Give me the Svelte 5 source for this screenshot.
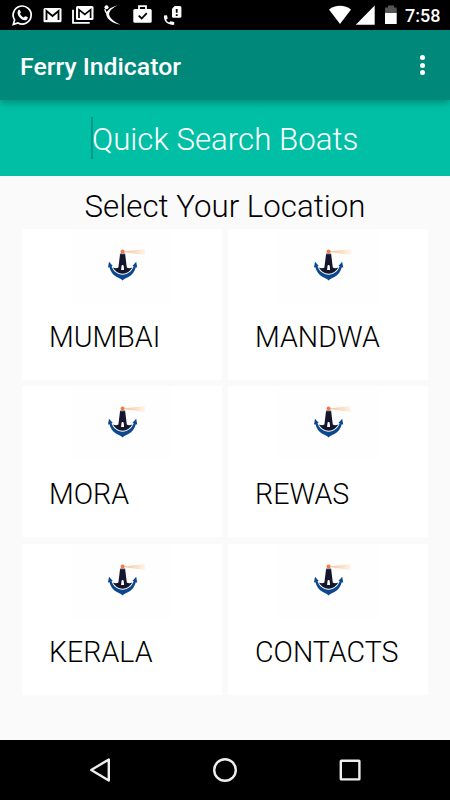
<script lang="ts">
  const locations = ["MUMBAI", "MANDWA", "MORA", "REWAS", "KERALA", "CONTACTS"];
</script>

<!-- Lighthouse standing on an anchor, shown on every card -->
{#snippet lighthouse()}
  <svg class="logo" viewBox="0 0 100 74" aria-hidden="true">
    <defs>
      <linearGradient id="beam" x1="0" x2="1" y1="0" y2="0">
        <stop offset="0" stop-color="#f8c79d" />
        <stop offset="0.6" stop-color="#fbe0c8" />
        <stop offset="1" stop-color="#fff6ee" />
      </linearGradient>
    </defs>
    <path d="M52.5 22.3 73 20v6l-20.5-2.7z" fill="url(#beam)" />
    <path d="M40.8 38.6c2.2.8 4.4.7 5.6 0l1.700-13.800h5l1.700 13.800c1.200.7 3.400.8 5.600 0-2.300 3.700-5.400 5.900-9.800 6.200-4.400-.3-7.500-2.500-9.800-6.200z" fill="#15152d" />
    <path d="M49.500 37c0-1.500 2.200-1.500 2.200 0l.4 4h-3z" fill="#fff" />
    <circle cx="50.600" cy="22.600" r="2" fill="#f37b43" />
    <path d="M47.900 24.900h5.400" stroke="#8b8190" stroke-width=".7" />
    <path d="M37 32.800 40.800 37l-1.300.2c1.800 5.100 6 8.300 11.100 8.600 5.100-.3 9.300-3.500 11.100-8.600l-1.300-.2 3.800-4.200 1 5.800-1.400-.4c-1.200 4.500-3.400 7.500-7.400 9.800-2.200 1-4 1.800-5.800 3.400-1.800-1.600-3.600-2.400-5.800-3.400-4-2.300-6.200-5.300-7.400-9.800l-1.400.4z" fill="#0b488f" />
  </svg>
{/snippet}

<div class="screen">
  <div class="status-bar">
    <svg class="notifications" viewBox="0 0 200 30" aria-hidden="true">
      <path d="m13.300 24.400 1.300-4.500A9 9 0 1 1 18 23z" fill="none" stroke="#fff" stroke-width="1.700" />
      <path d="M18.300 10.200c.6-.6 1.500-.4 1.800.3l.7 1.800c.2.7-1 1.400-.8 1.800.8 1.600 2 2.700 3.600 3.300.5.2 1.300-1.400 1.900-1.200l2 .9c.8.4-.1 2.400-1.100 2.800-4.700 1.700-11.100-5.800-8.100-9.700z" fill="#fff" />
      <rect x="43.500" y="8" width="18" height="14.300" rx="1.500" fill="#fff" />
      <path d="M46.500 20v-9l6 5 6-5v9" fill="none" stroke="#000" stroke-width="1.800" />
      <path d="M73 9.700v13.200h16.700" fill="none" stroke="#fff" stroke-width="1.800" />
      <rect x="76" y="6" width="17.500" height="14" rx="1.500" fill="#fff" />
      <path d="M79 18v-8.300l5.800 4.800 5.800-4.800V18" fill="none" stroke="#000" stroke-width="1.700" />
      <circle cx="106.500" cy="7.200" r="2" fill="#fff" />
      <path d="M117.500 5.500c-7.600 1.700-12.300 6-11 10.200 1 3.600 5.800 7.500 14 9-6.400-3-10.400-6.500-11.200-9.500-.9-3.300 2.300-7 8.200-9.700z" fill="#fff" />
      <path d="M104.800 9.200c.4 2.400 1.200 3.400 2.400 4.700" fill="none" stroke="#fff" stroke-width="1.400" />
      <rect x="133.300" y="9" width="18.400" height="13.800" rx="1.600" fill="#fff" />
      <path d="M139 9V6.100h7V9" fill="none" stroke="#fff" stroke-width="1.800" />
      <path d="m138.700 15.600 3 2.900 5.100-5.400" fill="none" stroke="#000" stroke-width="1.800" />
      <path d="m164 15.600 3-.3.700 3.300-1.500 1.200c.7 1.400 1.500 2 2.900 2.800l1.400-1.400 3.700.9v2.700c-6.200.8-10.900-3.400-10.200-9.200z" fill="#fff" />
      <path d="M174.700 6h5.200q1.500 0 1.500 1.500v8.700q0 1.500-1.500 1.500h-6.400q-1.500 0-1.500-1.500V8.700z" fill="#fff" />
      <path d="M176.700 9v3.800m0 1.500v1.800" stroke="#000" stroke-width="1.800" />
    </svg>
    <svg class="signals" viewBox="0 0 72 30" aria-hidden="true">
      <path d="M1 9.500C7.300 4.500 16.700 4.500 23 9.500L12 24z" fill="#fff" />
      <path d="M46.700 5.500V24.700H27.800z" fill="#fff" />
      <path d="M60 5.500h6v2h2.700v6H57v-6h3z" fill="#555" />
      <path d="M57 13h11.700v11H57z" fill="#fff" />
    </svg>
    <span class="clock">7:58</span>
  </div>

  <header class="app-bar">
    <h1>Ferry Indicator</h1>
    <button type="button" class="menu" aria-label="More options">
      <i></i><i></i><i></i>
    </button>
  </header>

  <div class="search">
    <span class="caret"></span>
    <span class="hint">Quick Search Boats</span>
  </div>

  <main>
    <h2>Select Your Location</h2>
    <div class="grid">
      {#each locations as name}
        <div class="card">
          {@render lighthouse()}
          <span class="name">{name}</span>
        </div>
      {/each}
    </div>
  </main>

  <nav class="nav-bar">
    <svg viewBox="0 0 30 30" aria-label="Back">
      <path d="M23.800 4.500v21L6.200 15z" />
    </svg>
    <svg viewBox="0 0 30 30" aria-label="Home">
      <circle cx="15" cy="15" r="10.800" />
    </svg>
    <svg viewBox="0 0 30 30" aria-label="Recent apps">
      <rect x="5.800" y="5.800" width="18.600" height="18.600" rx=".5" />
    </svg>
  </nav>
</div>

<style>
  :global(body) {
    margin: 0;
    background: #000;
  }

  .screen {
    width: 450px;
    height: 800px;
    display: flex;
    flex-direction: column;
    overflow: hidden;
    background: #fafafa;
    font-family: Roboto, sans-serif;
  }

  .status-bar {
    flex: none;
    height: 30px;
    display: flex;
    align-items: center;
    background: #000;
    color: #fff;
  }

  .notifications {
    width: 200px;
    height: 30px;
  }

  .signals {
    width: 72px;
    height: 30px;
    margin-left: 128px;
  }

  .clock {
    margin-left: 5px;
    padding-top: 2px;
    font-size: 18px;
    line-height: 28px;
    font-weight: 500;
  }

  .app-bar {
    flex: none;
    box-sizing: border-box;
    position: relative;
    height: 70px;
    padding: 3px 15px 0 20px;
    display: flex;
    align-items: center;
    justify-content: space-between;
    background: #00897b;
    box-shadow: 0 3px 7px rgba(0, 0, 0, 0.26);
  }

  h1 {
    margin: 0;
    padding-top: 1px;
    color: #fff;
    font-size: 24.8px;
    line-height: 30px;
    font-weight: 500;
  }

  .menu {
    width: 25px;
    padding: 0 0 3px;
    border: 0;
    background: none;
    display: flex;
    flex-direction: column;
    align-items: center;
    gap: 2.5px;
  }

  .menu i {
    width: 5px;
    height: 5px;
    border-radius: 50%;
    background: #fff;
  }

  .search {
    flex: none;
    height: 76px;
    display: flex;
    align-items: center;
    background: #00bfa5;
  }

  .caret {
    width: 2px;
    height: 42px;
    margin-left: 91px;
    background: #009688;
  }

  .hint {
    margin-left: -1px;
    padding-top: 3px;
    color: #fff;
    font-size: 31.25px;
    line-height: 42px;
    font-weight: 300;
    white-space: nowrap;
  }

  main {
    flex: 1;
    padding: 9px 22px 0;
  }

  h2 {
    margin: 0 0 1px;
    color: #000;
    font-size: 31.25px;
    line-height: 43px;
    font-weight: 300;
    text-align: center;
    white-space: nowrap;
  }

  .grid {
    display: grid;
    grid-template-columns: 200px 200px;
    grid-auto-rows: 151px;
    gap: 6.4px 6px;
  }

  .card {
    background: #fff;
    display: flex;
    flex-direction: column;
  }

  .logo {
    width: 100px;
    height: 74px;
    margin-left: 50px;
    background: #fefefe;
  }

  .name {
    padding: 15px 0 0 27px;
    color: #000;
    font-size: 28.6px;
    line-height: 38px;
    font-weight: 300;
    white-space: nowrap;
  }

  .nav-bar {
    flex: none;
    height: 60px;
    display: flex;
    align-items: center;
    justify-content: center;
    gap: 95px;
    background: #000;
  }

  .nav-bar svg {
    width: 30px;
    height: 30px;
    fill: none;
    stroke: #eee;
    stroke-width: 2.4;
    stroke-linejoin: round;
  }
</style>
